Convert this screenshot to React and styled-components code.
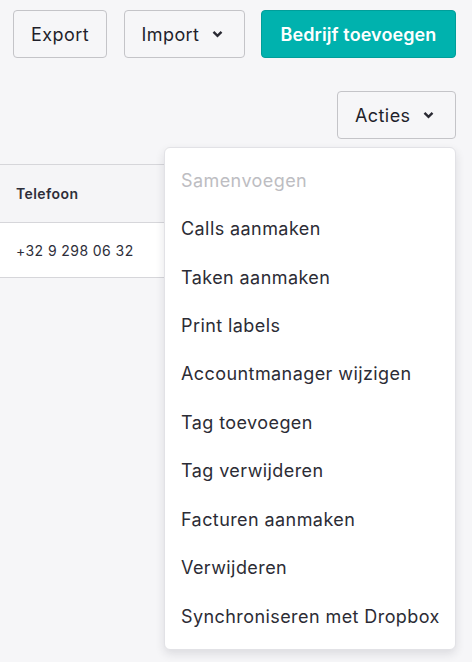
import React from "react";
import styled, { createGlobalStyle } from "styled-components";

const Global = createGlobalStyle`
  html, body { margin: 0; padding: 0; background: #f6f6f8; }
  body { font-family: Inter, "Noto Sans", sans-serif; color: #1f1f2b; letter-spacing: 0.42px; }
  * { box-sizing: border-box; }
`;

const Page = styled.div`
  position: relative;
  width: 472px;
  height: 662px;
  overflow: hidden;
  background: #f6f6f8;
`;

const Toolbar = styled.div`
  display: flex;
  justify-content: flex-end;
  gap: 16.5px;
  padding: 10px 16px 0 12px;
`;

const Button = styled.button`
  display: inline-flex;
  align-items: center;
  gap: 13px;
  height: 48px;
  padding: ${(p) => (p.$chevron ? "0 17px" : "0")};
  border-radius: 4px;
  font-family: Inter, "Noto Sans", sans-serif;
  font-size: 18px;
  white-space: nowrap;
  flex: none;
  letter-spacing: ${(p) => (p.$primary ? "0.1px" : "0.42px")};
  font-weight: ${(p) => (p.$primary ? 600 : 400)};
  color: ${(p) => (p.$primary ? "#ffffff" : "#1f1f2b")};
  background: ${(p) => (p.$primary ? "#00b2ae" : "#f6f6f8")};
  border: 1px solid ${(p) => (p.$primary ? "#009e9a" : "#c4c4c8")};
  width: ${(p) => p.$w}px;
  justify-content: ${(p) => (p.$chevron ? "flex-start" : "center")};
`;

const ActionRow = styled.div`
  display: flex;
  justify-content: flex-end;
  padding: 33px 16px 0 0;
`;

const TableWrap = styled.div`
  margin-top: 25px;
  width: 300px;
  border-top: 1px solid #d6d6da;
`;

const HeadRow = styled.div`
  height: 58px;
  display: flex;
  align-items: center;
  padding-left: 16px;
  background: #f5f5f7;
  border-bottom: 1px solid #d6d6da;
  font-size: 14px;
  font-weight: 600;
  color: #2e2e3a;
`;

const BodyRow = styled.div`
  height: 55px;
  display: flex;
  align-items: center;
  padding-left: 16px;
  background: #ffffff;
  border-bottom: 1px solid #d6d6da;
  font-size: 14px;
  color: #2e2e3a;
`;

const Menu = styled.ul`
  position: absolute;
  top: 147px;
  left: 164px;
  width: 292px;
  margin: 0;
  padding: 8px 0 9px;
  list-style: none;
  background: #ffffff;
  border: 1px solid #e2e2e6;
  border-radius: 6px;
  box-shadow: 0 4px 10px rgba(30, 30, 50, 0.12);
`;

const MenuItem = styled.li`
  height: 48.45px;
  display: flex;
  align-items: center;
  padding-left: 16px;
  font-size: 18px;
  color: ${(p) => (p.$disabled ? "#bdbdc2" : "#2c2c35")};
  white-space: nowrap;
`;

const Chevron = () => (
  <svg width="11" height="8" viewBox="0 0 11 8">
    <polyline points="1.5,1.8 5.5,5.8 9.5,1.8" fill="none" stroke="#2a2a33" strokeWidth="2.4" />
  </svg>
);

const items = [
  "Calls aanmaken",
  "Taken aanmaken",
  "Print labels",
  "Accountmanager wijzigen",
  "Tag toevoegen",
  "Tag verwijderen",
  "Facturen aanmaken",
  "Verwijderen",
  "Synchroniseren met Dropbox",
];

export default function App() {
  return (
    <Page>
      <Global />
      <Toolbar>
        <Button $w={94}>Export</Button>
        <Button $w={121} $chevron>
          Import <Chevron />
        </Button>
        <Button $w={195} $primary>Bedrijf toevoegen</Button>
      </Toolbar>
      <ActionRow>
        <Button $w={119} $chevron>
          Acties <Chevron />
        </Button>
      </ActionRow>
      <TableWrap>
        <HeadRow>Telefoon</HeadRow>
        <BodyRow>+32 9 298 06 32</BodyRow>
      </TableWrap>
      <Menu>
        <MenuItem $disabled>Samenvoegen</MenuItem>
        {items.map((t) => (
          <MenuItem key={t}>{t}</MenuItem>
        ))}
      </Menu>
    </Page>
  );
}
